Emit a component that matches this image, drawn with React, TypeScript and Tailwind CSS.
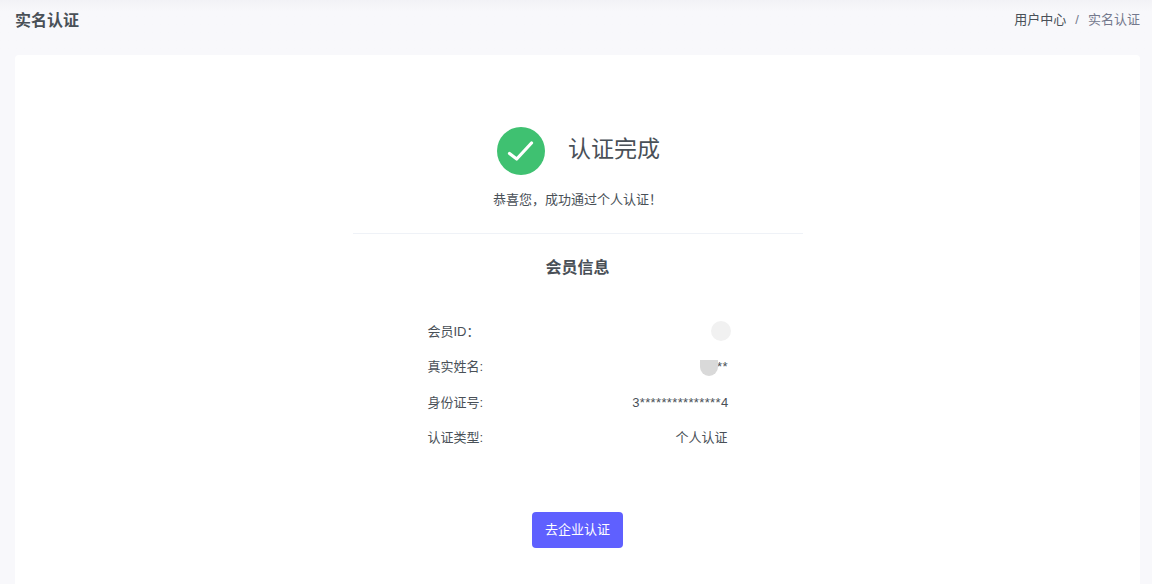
export default function App() {
  const rows: [string, React.ReactNode][] = [
    ["会员ID：", <span className="relative inline-block h-[21px] w-[1px]"><span className="absolute left-[-16px] top-[2px] h-5 w-5 rounded-full bg-[#f1f1f1]" /></span>],
    ["真实姓名:", <span className="relative inline-block -mr-[0.35px] tracking-[0.35px]">
      <span>**</span>
      <span className="absolute left-[-17px] top-[3px] h-4 w-[18px] rounded-b-full bg-[#d9d9d9]" />
    </span>],
    ["身份证号:", <span className="-mr-[1px] tracking-[0.35px]">3***************4</span>],
    ["认证类型:", "个人认证"],
  ];
  return (
    <div className="h-[584px] overflow-hidden bg-[#f8f8fb] pl-[15px] pr-[12px] text-[13px] text-[#495057] [font-family:'Liberation_Sans','Noto_Sans_CJK_SC',sans-serif]">
      <div className="-ml-[15px] -mr-[12px] flex h-[55px] items-start justify-between bg-gradient-to-b from-[#f2f2f6] to-[#f8f8fb] to-[12px] pl-[15px] pr-[12px] pt-[10px]">
        <h1 className="text-[16px] font-semibold leading-[22px] text-[#495057]">实名认证</h1>
        <div className="flex items-center gap-[9px] leading-[20px]">
          <span>用户中心</span>
          <span className="text-[#74788d]">/</span>
          <span className="text-[#74788d]">实名认证</span>
        </div>
      </div>
      <main className="flex h-[560px] flex-col items-center rounded-[4px] bg-white pt-[72px]">
        <div className="flex h-12 items-center gap-[23px] pl-[2px]">
          <span className="flex h-12 w-12 items-center justify-center rounded-full bg-[#3fc171]">
            <svg width="30" height="24" viewBox="0 0 30 24" fill="none" stroke="white" strokeWidth="3.2" strokeLinecap="round" strokeLinejoin="round">
              <path d="M3.5 14.5 L10.7 20 L25.5 4" />
            </svg>
          </span>
          <h2 className="pb-[4px] text-[23px] font-normal leading-[32px] text-[#495057]">认证完成</h2>
        </div>
        <p className="mt-[15px] leading-[20px] text-[#495057]">恭喜您，成功通过个人认证！</p>
        <div className="mt-[23px] w-[450px] border-t border-[#eff2f7]" />
        <h3 className="mt-[22px] text-[16px] font-semibold leading-[24px] text-[#495057]">会员信息</h3>
        <div className="mt-[34.5px] flex w-[300px] flex-col">
          {rows.map(([k, v], i) => (
            <div key={i} className="flex h-[35.33px] items-center justify-between leading-[20px]">
              <span>{k}</span>
              <span>{v}</span>
            </div>
          ))}
        </div>
        <button className="mt-[56px] h-9 w-[91px] rounded-[4px] bg-[#5f60ff] text-[13px] text-white">去企业认证</button>
      </main>
    </div>
  );
}
